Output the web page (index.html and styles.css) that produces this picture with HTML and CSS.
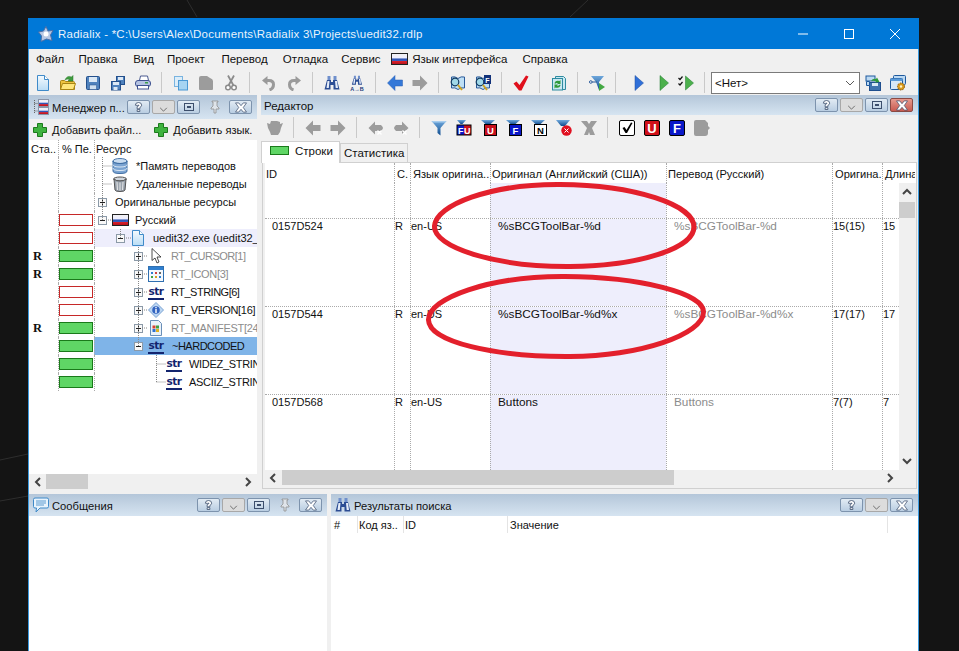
FILE: index.html
```
<!DOCTYPE html>
<html lang="ru">
<head>
<meta charset="utf-8">
<title>Radialix</title>
<link rel="stylesheet" href="styles.css">
</head>
<body>
<svg class="defs" width="0" height="0">
<defs>
<linearGradient id="gd" x1="0" y1="0" x2="0" y2="1"><stop offset="0" stop-color="#f4fafe"/><stop offset="1" stop-color="#b9dcf5"/></linearGradient>
<linearGradient id="gf" x1="0" y1="0" x2="0" y2="1"><stop offset="0" stop-color="#6fa8dc"/><stop offset="1" stop-color="#0f4c8f"/></linearGradient>
<linearGradient id="gr" x1="0" y1="0" x2="0" y2="1"><stop offset="0" stop-color="#f2f2f2"/><stop offset=".4" stop-color="#eef"/><stop offset=".5" stop-color="#2b52b0"/><stop offset=".68" stop-color="#3a5fc0"/><stop offset=".72" stop-color="#d8202a"/><stop offset="1" stop-color="#b01018"/></linearGradient>
<symbol id="logo" viewBox="0 0 16 16"><path d="M8 .5l2 4.500 5-.5-2.500 4.500 1.500 5.500-5.500-1.500L3 15.500l.5-5.500L.5 6l5-1z" fill="#b8c8e4" stroke="#4a6fa8"/><circle cx="8" cy="8" r="2.500" fill="#fff"/></symbol>
<symbol id="doc" viewBox="0 0 16 16"><path d="M2.500.500h7l4 4v11h-11z" fill="url(#gd)" stroke="#3f8ac9"/><path d="M9.500.500v4h4" fill="#fff" stroke="#3f8ac9"/></symbol>
<symbol id="folder" viewBox="0 0 16 16"><path d="M.5 14.500V6.500q0-1 1-1h3l1 1h8q1 0 1 1v7z" fill="#eec33f" stroke="#a98514"/><path d="M.5 14.500l2-6h13l-2 6z" fill="#ffe67c" stroke="#a98514"/><path d="M5 5q2-5 6.500-3L13 .5V6H8l1.500-1.500Q7 3.500 5 5z" fill="#3f9c3f" stroke="#2a7a2a" stroke-width=".5"/></symbol>
<symbol id="save" viewBox="0 0 16 16"><rect x="1.500" y="1.500" width="13" height="13" rx="1" fill="#4f82bd" stroke="#24508c"/><rect x="4" y="2" width="8" height="5" fill="#dbe8f5"/><rect x="4.500" y="10" width="7" height="4.500" fill="#cfe0f0" stroke="#24508c" stroke-width=".5"/></symbol>
<symbol id="saveall" viewBox="0 0 16 16"><rect x="6.500" y="1.500" width="8" height="8" fill="#4f82bd" stroke="#24508c"/><rect x="8" y="2" width="5" height="3" fill="#dbe8f5"/><rect x="1.500" y="6.500" width="9" height="8.500" fill="#4f82bd" stroke="#24508c"/><rect x="3" y="7" width="6" height="3" fill="#dbe8f5"/><rect x="3.500" y="12" width="4" height="3" fill="#dbe8f5"/></symbol>
<symbol id="print" viewBox="0 0 16 16"><path d="M4.500 5.500l1-4.500h7l1 4.500z" fill="#fff" stroke="#4a5a90"/><rect x=".5" y="5.500" width="15" height="6" rx="2.500" fill="#b5c3e2" stroke="#3f5290"/><rect x="2.500" y="10.500" width="11" height="3.500" fill="#fff" stroke="#3f5290"/><rect x="10" y="7" width="3" height="1.500" fill="#3ea04a"/></symbol>
<symbol id="copy" viewBox="0 0 16 16"><rect x="1.500" y="1.500" width="8" height="10" fill="#dcedf9" stroke="#79b4e0"/><rect x="5.500" y="5.500" width="9" height="9.500" fill="#a6d4f2" stroke="#4a98d4"/></symbol>
<symbol id="pasteg" viewBox="0 0 16 16"><path d="M1 3q0-2 2-2h6l3 2q3 1 3 3v8q0 1-1 1H2q-1 0-1-1z" fill="#9c9c9c"/></symbol>
<symbol id="pasteg2" viewBox="0 0 16 16"><path d="M0 3l3 1 1-3h6l3 1v2l3-1-2 5-1 4-2 3H4l-1-3-2-4z" fill="#9c9c9c"/></symbol>
<symbol id="cutg" viewBox="0 0 16 16"><path d="M5 .5l5.500 10M11 .5L5.500 10.500" stroke="#8c8c8c" stroke-width="1.800" fill="none"/><circle cx="5" cy="12.500" r="2.300" fill="#fff" stroke="#8c8c8c" stroke-width="1.500"/><circle cx="11" cy="12.500" r="2.300" fill="#fff" stroke="#8c8c8c" stroke-width="1.500"/></symbol>
<symbol id="undog" viewBox="0 0 16 16"><path d="M5 5.500h3q4.500 0 4.500 4t-4 5.500" stroke="#9a9a9a" stroke-width="3" fill="none"/><path d="M1 5.500L6.500 1v9z" fill="#9a9a9a"/></symbol>
<symbol id="redog" viewBox="0 0 16 16"><path d="M11 5.500H8q-4.500 0-4.500 4t4 5.500" stroke="#9a9a9a" stroke-width="3" fill="none"/><path d="M15 5.500L9.500 1v9z" fill="#9a9a9a"/></symbol>
<symbol id="bino" viewBox="0 0 16 16"><path d="M3.500 1h3v4h-3zM9.500 1h3v4h-3z" fill="#6f8fcc"/><path d="M3 5h4v2h2V5h4l2.500 9.500H9.500V10h-3v4.500H.5z" fill="#2c4d94"/><path d="M3.500 6h2L4.800 13H2.500zM11 6h2l1 7h-2.300z" fill="#e6edf9"/></symbol>
<symbol id="binoab" viewBox="0 0 16 16"><g transform="translate(2.500 0) scale(.68)"><use href="#bino" width="16" height="16"/></g><text x="8" y="16" class="svgt" font-size="5.500" text-anchor="middle" fill="#1c3a7a">A→B</text></symbol>
<symbol id="al" viewBox="0 0 16 16"><path d="M.5 8L8 .5V5h7.500v6H8v4.500z" fill="#3478d8" stroke="#2a5fb0" stroke-width=".5"/></symbol>
<symbol id="ar" viewBox="0 0 16 16"><path d="M15.500 8L8 .5V5H.5v6H8v4.500z" fill="#9c9c9c"/></symbol>
<symbol id="alg" viewBox="0 0 16 16"><path d="M.5 8L8 .5V5h7.500v6H8v4.500z" fill="#9c9c9c"/></symbol>
<symbol id="alx" viewBox="0 0 16 16"><path d="M.5 8L7 1.500V5h6q2 2 2 3t-2 3H7v3.500z" fill="#9c9c9c"/><path d="M9.500 10.500l4 4m0-4l-4 4" stroke="#fff" stroke-width="1.300"/></symbol>
<symbol id="arx" viewBox="0 0 16 16"><path d="M15.500 8L9 1.500V5H3Q1 7 1 8t2 3h6v3.500z" fill="#9c9c9c"/><path d="M9.500 10.500l4 4m0-4l-4 4" stroke="#fff" stroke-width="1.300"/></symbol>
<symbol id="book" viewBox="0 0 16 16"><path d="M8 3.500Q5 1 1.500 2v11q3.500-1 6.500 1.500Q11 12 14.500 13V2Q11 1 8 3.500z" fill="#bfe0f5" stroke="#2a5a9a"/><circle cx="5" cy="7" r="3.800" fill="#a0d8e8" stroke="#123a60" stroke-width="1.200"/><path d="M8 10l4 5" stroke="#cda21e" stroke-width="2"/></symbol>
<symbol id="bookf" viewBox="0 0 16 16"><use href="#book" width="16" height="16"/><rect x="9" y="0" width="7" height="9" fill="#12327a"/><text x="12.500" y="7.500" class="svgt" font-size="7" text-anchor="middle" fill="#fff">F</text></symbol>
<symbol id="tick" viewBox="0 0 16 16"><path d="M.5 8.500l3-2 3 3.500L13 .5l2.500 1L8.500 15.500H6z" fill="#e0101c"/></symbol>
<symbol id="refresh" viewBox="0 0 16 16"><path d="M4.500 1.500h8l2 2v11h-10z" fill="#c8e8f2" stroke="#2e8ba0"/><rect x="1.500" y="3.500" width="10" height="11.500" fill="#c8e8f2" stroke="#2e8ba0"/><path d="M3.500 8q1-3 5-2l1-1v4H6l1-1q-2-.5-3 1zM9.500 10.500q-1 3-5 2l-1 1v-4H7l-1 1q2 .5 3-1z" fill="#2f9a3a"/></symbol>
<symbol id="filterrun" viewBox="0 0 16 16"><path d="M2 1h13l-5 6v8L7 7z" fill="url(#gf)"/><circle cx="1.800" cy="7" r="1.300" fill="#fff" stroke="#2a5a9a"/><path d="M3 7h5" stroke="#2a5a9a"/><path d="M10 8l6 4-6 4z" fill="#43a843"/></symbol>
<symbol id="pb" viewBox="0 0 16 16"><path d="M4 .5l8.500 7.500L4 15.500z" fill="#2f6fd8" stroke="#1e4f9e" stroke-width=".5"/></symbol>
<symbol id="pg" viewBox="0 0 16 16"><path d="M4 .5l8.500 7.500L4 15.500z" fill="#4cb04c" stroke="#1e7a2e" stroke-width=".5"/></symbol>
<symbol id="pc" viewBox="0 0 16 16"><path d="M7.500 1l8 7-8 7z" fill="#4cb04c" stroke="#1e7a2e" stroke-width=".5"/><path d="M.5 3l1.500 1.500L4.500 1.500M.5 8.500L2 10l2.500-3" fill="none" stroke="#111" stroke-width="1.200"/></symbol>
<symbol id="savearr" viewBox="0 0 16 16"><rect x="1" y="1" width="9" height="5" fill="#bcd9f2" stroke="#1f5a9e"/><rect x="4.500" y="7.500" width="11" height="8" fill="#3f73ae" stroke="#1f4f8e"/><rect x="7" y="8" width="6" height="3" fill="#d8e8f5"/><path d="M1.500 6.500h3v4h-3z" fill="#bcd9f2" stroke="#1f5a9e"/><path d="M6 6q2-3 5-2l1-1.500L14.500 7l-5 .5L11 6q-2-.5-5 0z" fill="#2f9a3a"/></symbol>
<symbol id="gearstack" viewBox="0 0 16 16"><rect x="3.500" y=".5" width="12" height="9" rx="1" fill="#bcd9f2" stroke="#1f5a9e"/><rect x=".5" y="3.500" width="12" height="11" rx="1" fill="#d6e8f7" stroke="#1f5a9e"/><rect x=".5" y="3.500" width="12" height="2.500" fill="#5a9ad8"/><circle cx="11" cy="11.500" r="3.500" fill="#d99a1c" stroke="#8c5c10" stroke-dasharray="1.500 1"/><circle cx="11" cy="11.500" r="1.200" fill="#fff3c8"/></symbol>
<symbol id="funnel" viewBox="0 0 16 16"><path d="M.5 1h15L9.500 8v7.500L6.500 13V8z" fill="url(#gf)"/><path d="M.5 1h15l-1.500 1.500H2z" fill="#a8cdee"/></symbol>
<symbol id="ffu" viewBox="0 0 16 16"><path d="M1 0h9L6.500 4h-2z" fill="url(#gf)"/><rect x=".5" y="4.500" width="15" height="11" fill="#000"/><rect x="1.500" y="5.500" width="6.500" height="9" fill="#0a18c8"/><rect x="8" y="5.500" width="6.500" height="9" fill="#c8101c"/><text x="4.800" y="13.500" class="svgt" font-size="9" text-anchor="middle" fill="#fff">F</text><text x="11.300" y="13.500" class="svgt" font-size="9" text-anchor="middle" fill="#fff">U</text></symbol>
<symbol id="fu" viewBox="0 0 16 16"><path d="M0 0h14L9 4.500H5z" fill="url(#gf)"/><rect x="3.500" y="4.500" width="12" height="11" fill="#c8101c" stroke="#000"/><text x="9.500" y="13.500" class="svgt" font-size="9.500" text-anchor="middle" fill="#fff">U</text></symbol>
<symbol id="ff" viewBox="0 0 16 16"><path d="M0 0h14L9 4.500H5z" fill="url(#gf)"/><rect x="3.500" y="4.500" width="12" height="11" fill="#0a18c8" stroke="#000"/><text x="9.500" y="13.500" class="svgt" font-size="9.500" text-anchor="middle" fill="#fff">F</text></symbol>
<symbol id="fn" viewBox="0 0 16 16"><path d="M0 0h14L9 4.500H5z" fill="url(#gf)"/><rect x="3.500" y="4.500" width="12" height="11" fill="#fff" stroke="#000"/><text x="9.500" y="13.500" class="svgt" font-size="9.500" text-anchor="middle" fill="#000">N</text></symbol>
<symbol id="fx" viewBox="0 0 16 16"><path d="M0 0h14L9 6H5z" fill="url(#gf)"/><circle cx="10.500" cy="10.500" r="5.200" fill="#e01020"/><path d="M8.500 8.500l4 4m0-4l-4 4" stroke="#fff" stroke-width="1"/></symbol>
<symbol id="xg" viewBox="0 0 16 16"><path d="M0 1h6l2 3 2-3h6l-5 7 3 7H9L8 12l-1 3H3l3-7z" fill="#9c9c9c"/></symbol>
<symbol id="bchk" viewBox="0 0 16 16"><rect x=".5" y=".5" width="15" height="15" rx="1.500" fill="#fff" stroke="#000"/><path d="M3.500 8l2-1 2 3L12 2.500l1.500.5L8 13H6.500z" fill="#000"/></symbol>
<symbol id="bu" viewBox="0 0 16 16"><rect x=".5" y=".5" width="15" height="15" rx="1.500" fill="#d01018" stroke="#000"/><text x="8" y="13" class="svgt" font-size="13" text-anchor="middle" fill="#fff">U</text></symbol>
<symbol id="bf" viewBox="0 0 16 16"><rect x=".5" y=".5" width="15" height="15" rx="1.500" fill="#0a18c8" stroke="#000"/><text x="8" y="13" class="svgt" font-size="13" text-anchor="middle" fill="#fff">F</text></symbol>
<symbol id="bg" viewBox="0 0 16 16"><path d="M0 2q0-2 2-2h9l3 3v3l2 2-2 2v3q0 3-3 3H2q-2 0-2-2z" fill="#9c9c9c"/></symbol>
<symbol id="plus" viewBox="0 0 14 14"><path d="M4.500.5h5v4h4v5h-4v4h-5v-4h-4v-5h4z" fill="#3fb33f" stroke="#1c7a1c"/></symbol>
<symbol id="mgr" viewBox="0 0 16 16"><rect x="5.500" y=".5" width="10" height="7" fill="url(#gr)" stroke="#8a94a8"/><rect x="5.500" y="8.500" width="10" height="7" fill="url(#gr)" stroke="#8a94a8"/><path d="M1.500 1v14M1.500 4.500h3M1.500 12h3" stroke="#666" stroke-dasharray="1 1" fill="none"/></symbol>
<symbol id="msg" viewBox="0 0 16 16"><path d="M2 1h12q1.500 0 1.500 1.500v7Q15.500 11 14 11H7l-4 4 .5-4H2Q.5 11 .5 9.500v-7Q.5 1 2 1z" fill="#e8f3fc" stroke="#3f8ac9"/><path d="M3 4h10M3 6h10M3 8h8" stroke="#5b9ad0"/></symbol>
<symbol id="q" viewBox="0 0 10 12"><path d="M1.500 4Q1.500 1 5 1t3.500 3Q8.500 5.500 6.500 6.500v1.500h-3V5.500Q5.500 5 5.500 4H4.500Q4.500 4.500 1.500 4zM3.500 9h3v2h-3z" fill="#fff" stroke="#3c4e6c" stroke-width=".9"/></symbol>
<symbol id="chev" viewBox="0 0 10 6"><path d="M1 1l4 4 4-4" fill="none" stroke="#5a5a5a" stroke-width="1"/></symbol>
<symbol id="rest" viewBox="0 0 12 10"><rect x="1.500" y="1.500" width="9" height="7" fill="none" stroke="#3c4e6c"/><rect x="4" y="4" width="4" height="2" fill="#3c4e6c"/></symbol>
<symbol id="xb" viewBox="0 0 14 12"><path d="M1 1h3.500L7 4l2.500-3H13L9.500 6 13 11H9.500L7 8l-2.500 3H1l3.500-5z" fill="#fff" stroke="#3c4e6c" stroke-width=".8"/></symbol>
<symbol id="pin" viewBox="0 0 12 14"><path d="M3 1h6v1H8v4l2 2v1H7v4H5V9H2V8l2-2V2H3z" fill="#dfe4ea" stroke="#8f8f8f" stroke-width=".8"/></symbol>
<symbol id="db" viewBox="0 0 16 16"><ellipse cx="8" cy="3" rx="7" ry="2.500" fill="#c9dcf0" stroke="#4a78ac"/><path d="M1 3v10q0 2.500 7 2.500t7-2.500V3q0 2.500-7 2.500T1 3z" fill="#7ba4d2" stroke="#3f6ea4"/><path d="M1 6.500q0 2.500 7 2.500t7-2.500M1 10q0 2.500 7 2.500T15 10" fill="none" stroke="#dbe8f5"/></symbol>
<symbol id="trash" viewBox="0 0 16 16"><ellipse cx="8" cy="3" rx="6.500" ry="2" fill="#d0d6dd" stroke="#555"/><path d="M2 3l1 11q.5 1.500 5 1.500t5-1.500l1-11q-2 2-6 2T2 3z" fill="#9aa3ad" stroke="#555"/><path d="M5 6l.5 8M8 6.500v8M11 6l-.5 8" stroke="#e8e8e8"/></symbol>
<symbol id="cursor" viewBox="0 0 16 16"><path d="M4 .5v12l3-2.500 2 5 2-1-2-5h4z" fill="#fff" stroke="#222" stroke-width=".8"/></symbol>
<symbol id="grid" viewBox="0 0 16 16"><rect x=".5" y=".5" width="15" height="15" fill="#f4f8fc" stroke="#2f6fb0"/><rect x="1" y="1" width="14" height="3" fill="#2f7fd0"/><path d="M3 6h2v2H3z" fill="#2f7fd0"/><path d="M7 6h2v2H7z" fill="#d04040"/><path d="M11 6h2v2h-2z" fill="#666"/><path d="M3 10h2v2H3z" fill="#40a040"/><path d="M7 10h2v2H7z" fill="#d8a020"/><path d="M11 10h2v2h-2z" fill="#2f7fd0"/></symbol>
<symbol id="ver" viewBox="0 0 16 16"><path d="M8 .5L15.500 8 8 15.500.5 8z" fill="#bcd6f2" stroke="#7aa2d2"/><circle cx="8" cy="8" r="3.800" fill="#3264c0"/><path d="M7.300 5h1.400v1.200H7.300zM7.300 7h1.400v4H7.300z" fill="#fff"/></symbol>
<symbol id="mani" viewBox="0 0 16 16"><path d="M2.500.5h8l3 3v12h-11z" fill="#eaf2fa" stroke="#6a8fb8"/><rect x="4.500" y="5.500" width="3" height="3" fill="#d84030"/><rect x="8" y="5.500" width="3" height="3" fill="#40a040"/><rect x="4.500" y="9" width="3" height="3" fill="#3070d0"/><rect x="8" y="9" width="3" height="3" fill="#e0b020"/></symbol>
<symbol id="exp-plus" viewBox="0 0 9 9"><rect x=".5" y=".5" width="8" height="8" fill="#f8f8f8" stroke="#8c9aa8"/><path d="M2 4.500h5M4.500 2v5" stroke="#222"/></symbol>
<symbol id="exp-minus" viewBox="0 0 9 9"><rect x=".5" y=".5" width="8" height="8" fill="#f8f8f8" stroke="#8c9aa8"/><path d="M2 4.500h5" stroke="#222"/></symbol>
</defs>
</svg>

<svg class="wall" width="959" height="651"><path d="M187 0l10 17M588 0l-18 17M0 460l28-6M0 501l28-5" stroke="#2e2e2e" fill="none"/></svg>

<div class="window">
  <header class="titlebar">
    <svg class="ico title-logo"><use href="#logo"/></svg>
    <span class="title-text">Radialix - *C:\Users\Alex\Documents\Radialix 3\Projects\uedit32.rdlp</span>
    <div class="caption">
      <svg class="cap-ico" viewBox="0 0 12 12"><path d="M1 6h10" stroke="#fff"/></svg>
      <svg class="cap-ico" viewBox="0 0 12 12"><rect x="1.500" y="1.500" width="9" height="9" fill="none" stroke="#fff"/></svg>
      <svg class="cap-ico" viewBox="0 0 12 12"><path d="M1 1l10 10M11 1L1 11" stroke="#fff"/></svg>
    </div>
  </header>

  <nav class="menubar">
    <span class="mi m-a">Файл</span><span class="mi m-b">Правка</span><span class="mi m-c">Вид</span><span class="mi m-d">Проект</span><span class="mi m-e">Перевод</span><span class="mi m-f">Отладка</span><span class="mi m-g">Сервис</span>
    <svg class="flag m-h" viewBox="0 0 17 12"><rect x=".5" y=".5" width="16" height="11" fill="url(#gr)" stroke="#222"/></svg>
    <span class="mi m-i">Язык интерфейса</span><span class="mi m-j">Справка</span>
  </nav>

  <div class="toolbar main-tb">
    <span class="tb"><svg class="ico"><use href="#doc"/></svg></span>
    <span class="tb"><svg class="ico"><use href="#folder"/></svg></span>
    <span class="tb"><svg class="ico"><use href="#save"/></svg></span>
    <span class="tb"><svg class="ico"><use href="#saveall"/></svg></span>
    <span class="tb"><svg class="ico"><use href="#print"/></svg></span>
    <i class="sep"></i>
    <span class="tb"><svg class="ico"><use href="#copy"/></svg></span>
    <span class="tb"><svg class="ico"><use href="#pasteg"/></svg></span>
    <span class="tb"><svg class="ico"><use href="#cutg"/></svg></span>
    <i class="sep"></i>
    <span class="tb"><svg class="ico"><use href="#undog"/></svg></span>
    <span class="tb"><svg class="ico"><use href="#redog"/></svg></span>
    <i class="sep"></i>
    <span class="tb"><svg class="ico"><use href="#bino"/></svg></span>
    <span class="tb"><svg class="ico"><use href="#binoab"/></svg></span>
    <i class="sep"></i>
    <span class="tb"><svg class="ico"><use href="#al"/></svg></span>
    <span class="tb"><svg class="ico"><use href="#ar"/></svg></span>
    <i class="sep"></i>
    <span class="tb"><svg class="ico"><use href="#book"/></svg></span>
    <span class="tb"><svg class="ico"><use href="#bookf"/></svg></span>
    <i class="sep"></i>
    <span class="tb"><svg class="ico"><use href="#tick"/></svg></span>
    <i class="sep"></i>
    <span class="tb"><svg class="ico"><use href="#refresh"/></svg></span>
    <i class="sep"></i>
    <span class="tb"><svg class="ico"><use href="#filterrun"/></svg></span>
    <i class="sep sep-wide"></i>
    <span class="tb"><svg class="ico"><use href="#pb"/></svg></span>
    <span class="tb"><svg class="ico"><use href="#pg"/></svg></span>
    <span class="tb tb-narrow"><svg class="ico"><use href="#pc"/></svg></span>
    <i class="sep sep-combo"></i>
    <div class="combo"><span>&lt;Нет&gt;</span><svg class="chev"><use href="#chev"/></svg></div>
    <span class="tb"><svg class="ico"><use href="#savearr"/></svg></span>
    <span class="tb"><svg class="ico"><use href="#gearstack"/></svg></span>
  </div>

  <div class="dock-top">
    <section class="left-pane">
      <div class="pane-head head-tall">
        <svg class="ico head-ico"><use href="#mgr"/></svg>
        <span class="head-title">Менеджер п...</span>
        <div class="head-btns">
          <span class="hb"><svg class="hg-q"><use href="#q"/></svg></span>
          <span class="hb hb-grey"><svg class="hg-c"><use href="#chev"/></svg></span>
          <span class="hb"><svg class="hg-r"><use href="#rest"/></svg></span>
          <svg class="hg-p"><use href="#pin"/></svg>
          <span class="hb"><svg class="hg-x"><use href="#xb"/></svg></span>
        </div>
      </div>
      <div class="add-bar">
        <svg class="plus"><use href="#plus"/></svg><span class="add-l">Добавить файл...</span>
        <svg class="plus plus-2"><use href="#plus"/></svg><span class="add-l">Добавить язык.</span>
      </div>
      <div class="tree">
        <div class="tree-head"><span class="c-st">Ста..</span><span class="c-pr">% Пе.</span><span class="c-rs">Ресурс</span></div>
        <div class="tr"><span class="c-st"></span><span class="c-pr"></span><span class="c-rs i17"><svg class="ico"><use href="#db"/></svg><span class="lb g8">*Память переводов</span></span></div>
        <div class="tr"><span class="c-st"></span><span class="c-pr"></span><span class="c-rs i17"><svg class="ico"><use href="#trash"/></svg><span class="lb g8">Удаленные переводы</span></span></div>
        <div class="tr"><span class="c-st"></span><span class="c-pr"></span><span class="c-rs i3"><svg class="exp"><use href="#exp-plus"/></svg><span class="lb g8">Оригинальные ресурсы</span></span></div>
        <div class="tr"><span class="c-st"></span><span class="c-pr"><i class="bar bar-e"></i></span><span class="c-rs i3"><svg class="exp"><use href="#exp-minus"/></svg><svg class="flag fl-t" viewBox="0 0 17 12"><rect x=".5" y=".5" width="16" height="11" fill="url(#gr)" stroke="#222"/></svg><span class="lb g6">Русский</span></span></div>
        <div class="tr"><span class="c-st"></span><span class="c-pr"><i class="bar bar-e"></i></span><span class="c-rs i21 hl"><svg class="exp"><use href="#exp-minus"/></svg><svg class="ico ic-m7"><use href="#doc"/></svg><span class="lb g5">uedit32.exe (uedit32_</span></span></div>
        <div class="tr"><span class="c-st">R</span><span class="c-pr"><i class="bar bar-f"></i></span><span class="c-rs i39"><svg class="exp"><use href="#exp-plus"/></svg><svg class="ico ic-m5"><use href="#cursor"/></svg><span class="lb g7 grey up">RT_CURSOR[1]</span></span></div>
        <div class="tr"><span class="c-st">R</span><span class="c-pr"><i class="bar bar-f"></i></span><span class="c-rs i39"><svg class="exp"><use href="#exp-plus"/></svg><svg class="ico ic-m5"><use href="#grid"/></svg><span class="lb g7 grey up-s">RT_ICON[3]</span></span></div>
        <div class="tr"><span class="c-st"></span><span class="c-pr"><i class="bar bar-e"></i></span><span class="c-rs i39"><svg class="exp"><use href="#exp-plus"/></svg><span class="str ic-m5">str</span><span class="lb g7 up">RT_STRING[6]</span></span></div>
        <div class="tr"><span class="c-st"></span><span class="c-pr"><i class="bar bar-e"></i></span><span class="c-rs i39"><svg class="exp"><use href="#exp-plus"/></svg><svg class="ico ic-m5"><use href="#ver"/></svg><span class="lb g7 up-s">RT_VERSION[16]</span></span></div>
        <div class="tr"><span class="c-st">R</span><span class="c-pr"><i class="bar bar-f"></i></span><span class="c-rs i39"><svg class="exp"><use href="#exp-plus"/></svg><svg class="ico ic-m5"><use href="#mani"/></svg><span class="lb g7 grey up-s">RT_MANIFEST[24</span></span></div>
        <div class="tr"><span class="c-st"></span><span class="c-pr"><i class="bar bar-f"></i></span><span class="c-rs i39 sel"><svg class="exp"><use href="#exp-minus"/></svg><span class="str ic-m5">str</span><span class="lb g8 up">~HARDCODED</span></span></div>
        <div class="tr"><span class="c-st"></span><span class="c-pr"><i class="bar bar-f"></i></span><span class="c-rs i71"><span class="str">str</span><span class="lb g7 up-s">WIDEZ_STRIN</span></span></div>
        <div class="tr"><span class="c-st"></span><span class="c-pr"><i class="bar bar-f"></i></span><span class="c-rs i71"><span class="str">str</span><span class="lb g7 up-s">ASCIIZ_STRIN</span></span></div>
        <svg class="tree-lines" width="228" height="334"><path d="M73.500 17v63M73.500 26h9M73.500 44h9M91.500 89v9M109.500 107v99M113 116h6M113 134h5M113 152h5M113 170h5M113 188h5M127.500 215v27M127.500 224h9M127.500 242h9M77 80h5M95 98h7" stroke="#888" stroke-dasharray="1 1" fill="none"/></svg>
      </div>
      <div class="hscroll hs-left">
        <svg class="sb-l" viewBox="0 0 8 10"><path d="M6 1L2 5l4 4" fill="none" stroke="#444" stroke-width="2"/></svg>
        <i class="thumb th-left"></i>
        <svg class="sb-r" viewBox="0 0 8 10"><path d="M2 1l4 4-4 4" fill="none" stroke="#444" stroke-width="2"/></svg>
      </div>
    </section>

    <section class="editor">
      <div class="pane-head head-short">
        <span class="head-title ed-title">Редактор</span>
        <div class="head-btns">
          <span class="hb"><svg class="hg-q"><use href="#q"/></svg></span>
          <span class="hb hb-grey"><svg class="hg-c"><use href="#chev"/></svg></span>
          <span class="hb"><svg class="hg-r"><use href="#rest"/></svg></span>
          <span class="hb hb-red"><svg class="hg-x"><use href="#xb"/></svg></span>
        </div>
      </div>
      <div class="toolbar ed-tb">
        <span class="tb"><svg class="ico"><use href="#pasteg2"/></svg></span>
        <i class="sep"></i>
        <span class="tb"><svg class="ico"><use href="#alg"/></svg></span>
        <span class="tb"><svg class="ico"><use href="#ar"/></svg></span>
        <i class="sep"></i>
        <span class="tb"><svg class="ico"><use href="#alx"/></svg></span>
        <span class="tb"><svg class="ico"><use href="#arx"/></svg></span>
        <i class="sep"></i>
        <span class="tb"><svg class="ico"><use href="#funnel"/></svg></span>
        <span class="tb"><svg class="ico"><use href="#ffu"/></svg></span>
        <span class="tb"><svg class="ico"><use href="#fu"/></svg></span>
        <span class="tb"><svg class="ico"><use href="#ff"/></svg></span>
        <span class="tb"><svg class="ico"><use href="#fn"/></svg></span>
        <span class="tb"><svg class="ico"><use href="#fx"/></svg></span>
        <span class="tb"><svg class="ico"><use href="#xg"/></svg></span>
        <i class="sep"></i>
        <span class="tb"><svg class="ico"><use href="#bchk"/></svg></span>
        <span class="tb"><svg class="ico"><use href="#bu"/></svg></span>
        <span class="tb"><svg class="ico"><use href="#bf"/></svg></span>
        <span class="tb"><svg class="ico"><use href="#bg"/></svg></span>
      </div>
      <div class="tabs">
        <div class="tab tab-on"><i class="tab-swatch"></i><span>Строки</span></div>
        <div class="tab tab-off">Статистика</div>
      </div>
      <div class="panel">
        <div class="grid-head">
          <span class="gc g-id">ID</span><span class="gc">С.</span><span class="gc">Язык оригина..</span><span class="gc gc-tight">Оригинал (Английский (США))</span><span class="gc gc-mid">Перевод (Русский)</span><span class="gc">Оригина.</span><span class="gc">Длина</span>
        </div>
        <div class="grid-wrap">
          <div class="grid-body">
            <div class="gr gr-first"><span class="gd"></span><span class="gd"></span><span class="gd"></span><span class="gd lav"></span><span class="gd"></span><span class="gd"></span><span class="gd"></span></div>
            <div class="gr"><span class="gd d-id">0157D524</span><span class="gd d-n">R</span><span class="gd d-n">en-US</span><span class="gd lav d-t">%sBCGToolBar-%d</span><span class="gd d-t grey">%sBCGToolBar-%d</span><span class="gd d-n">15(15)</span><span class="gd d-n">15</span></div>
            <div class="gr"><span class="gd d-id">0157D544</span><span class="gd d-n">R</span><span class="gd d-n">en-US</span><span class="gd lav d-t">%sBCGToolBar-%d%x</span><span class="gd d-t grey">%sBCGToolBar-%d%x</span><span class="gd d-n">17(17)</span><span class="gd d-n">17</span></div>
            <div class="gr"><span class="gd d-id">0157D568</span><span class="gd d-n">R</span><span class="gd d-n">en-US</span><span class="gd lav d-t">Buttons</span><span class="gd d-t grey">Buttons</span><span class="gd d-n">7(7)</span><span class="gd d-n">7</span></div>
          </div>
          <div class="vscroll">
            <svg class="vs-up" viewBox="0 0 10 8"><path d="M1 6l4-4 4 4" fill="none" stroke="#444" stroke-width="2"/></svg>
            <i class="vthumb"></i>
            <svg class="vs-dn" viewBox="0 0 10 8"><path d="M1 2l4 4 4-4" fill="none" stroke="#444" stroke-width="2"/></svg>
          </div>
        </div>
        <div class="hscroll hs-ed">
          <svg class="sb-l" viewBox="0 0 8 10"><path d="M6 1L2 5l4 4" fill="none" stroke="#444" stroke-width="2"/></svg>
          <i class="thumb th-ed"></i>
          <svg class="sb-r" viewBox="0 0 8 10"><path d="M2 1l4 4-4 4" fill="none" stroke="#444" stroke-width="2"/></svg>
        </div>
      </div>
    </section>
  </div>

  <div class="dock-bottom">
    <section class="msgs">
      <div class="pane-head head-bot">
        <svg class="ico head-ico"><use href="#msg"/></svg>
        <span class="head-title">Сообщения</span>
        <div class="head-btns">
          <span class="hb"><svg class="hg-q"><use href="#q"/></svg></span>
          <span class="hb hb-grey"><svg class="hg-c"><use href="#chev"/></svg></span>
          <span class="hb"><svg class="hg-r"><use href="#rest"/></svg></span>
          <svg class="hg-p"><use href="#pin"/></svg>
          <span class="hb"><svg class="hg-x"><use href="#xb"/></svg></span>
        </div>
      </div>
      <div class="white-fill"></div>
    </section>
    <section class="search">
      <div class="pane-head head-bot">
        <svg class="ico head-ico s-ico"><use href="#bino"/></svg>
        <span class="head-title">Результаты поиска</span>
        <div class="head-btns">
          <span class="hb"><svg class="hg-q"><use href="#q"/></svg></span>
          <span class="hb hb-grey"><svg class="hg-c"><use href="#chev"/></svg></span>
          <span class="hb"><svg class="hg-x"><use href="#xb"/></svg></span>
        </div>
      </div>
      <div class="res-head"><span class="rh rh-a">#</span><span class="rh rh-b">Код яз..</span><span class="rh rh-c">ID</span><span class="rh rh-d">Значение</span><span class="rh rh-e"></span></div>
      <div class="white-fill"></div>
    </section>
  </div>
</div>

<svg class="annot" width="959" height="651" fill="none" stroke="#e3202c" stroke-width="5">
  <path d="M434.500 226C436 205 490 184 560 184.500C635 185 694 205 694 227C694 248 640 266 570 266.500C495 267 433 247 434.500 226Z"/>
  <path d="M428.500 320C428 298 490 276 565 276.500C640 277 704 293 703.500 312C703 335 640 356 570 356.500C495 357 429 342 428.500 320Z"/>
</svg>
</body>
</html>
```

FILE: styles.css
```
* { box-sizing: border-box; }
html, body { margin: 0; padding: 0; }
body {
  width: 959px;
  height: 651px;
  overflow: hidden;
  background: #141414;
  font-family: "Liberation Sans", sans-serif;
  font-size: 11px;
  color: #111;
  position: relative;
}
.defs { position: absolute; }
.wall { position: absolute; left: 0; top: 0; }
.annot { position: absolute; left: 0; top: 0; pointer-events: none; }
.svgt { font-family: "Liberation Sans", sans-serif; font-weight: 700; }

.window {
  position: relative;
  margin: 18px 0 0 28px;
  width: 891px;
  height: 633px;
  background: #f0f0f0;
  border-left: 1px solid #3a9ae0;
  border-right: 1px solid #3a9ae0;
  display: flex;
  flex-direction: column;
}

.titlebar {
  height: 31px;
  flex: none;
  margin: 0 -1px;
  background: #0078d7;
  color: #eaf3fb;
  display: flex;
  align-items: center;
  padding-left: 10px;
  font-size: 11.500px;
}
.title-logo { width: 16px; height: 16px; flex: none; }
.title-text { margin-left: 4px; padding-top: 1px; letter-spacing: .23px; }
.caption { margin-left: auto; display: flex; align-items: center; height: 100%; padding-right: 18px; gap: 34px; }
.cap-ico { width: 12px; height: 12px; }

.menubar { height: 21px; flex: none; display: flex; align-items: center; font-size: 11.500px; padding: 0 0 2px 7px; }
.mi { flex: none; }
.m-b { margin-left: 14.300px; }
.m-c { margin-left: 15.700px; }
.m-d { margin-left: 13px; }
.m-e { margin-left: 16.600px; }
.m-f { margin-left: 15px; }
.m-g { margin-left: 13px; }
.m-h { margin-left: 10.700px; }
.m-i { margin-left: 4px; }
.m-j { margin-left: 15px; }
.flag { width: 17px; height: 12px; flex: none; }

.toolbar { display: flex; align-items: center; flex: none; }
.main-tb { height: 25px; padding-left: 1px; }
.ed-tb { height: 25px; padding-left: 1px; }
.tb { width: 25px; height: 18px; flex: none; display: flex; align-items: center; justify-content: center; }
.tb-narrow { width: 20px; }
.ico { width: 16px; height: 16px; flex: none; display: block; }
.sep { width: 1px; height: 21px; margin: 0 6px; background: #c9c9c9; flex: none; }
.sep-wide { margin-right: 10px; }
.sep-combo { margin: 0 6px 0 8px; }
.combo {
  width: 149px;
  height: 22px;
  flex: none;
  background: #fff;
  border: 1px solid #7a7a7a;
  display: flex;
  align-items: center;
  justify-content: space-between;
  padding: 0 4px 0 3px;
  font-size: 11.500px;
}
.chev { width: 10px; height: 6px; }

.dock-top { height: 399px; flex: none; display: flex; gap: 4px; }
.dock-bottom { flex: 1; min-height: 0; display: flex; gap: 4px; }
.left-pane { width: 228px; flex: none; display: flex; flex-direction: column; }
.editor { flex: 1; min-width: 0; display: flex; flex-direction: column; }
.msgs { width: 298px; flex: none; display: flex; flex-direction: column; }
.search { flex: 1; min-width: 0; display: flex; flex-direction: column; }

.pane-head {
  flex: none;
  display: flex;
  align-items: center;
  background: linear-gradient(#b4c6d9, #d6e4f1);
  padding-right: 5px;
}
.head-tall { height: 24px; }
.head-short { height: 20px; }
.head-bot { height: 22px; }
.head-ico { margin-left: 4px; }
.s-ico { margin-left: 4px; }
.head-title { margin-left: 3px; padding-top: 1px; white-space: nowrap; font-size: 11.200px; }
.ed-title { margin-left: 3px; font-size: 11.500px; }
.head-btns { margin-left: auto; display: flex; align-items: center; gap: 2px; }
.hb {
  width: 23px;
  height: 14px;
  border: 1px solid #7d93ad;
  border-radius: 2px;
  background: linear-gradient(#e2ebf4, #b9cde2);
  display: flex;
  align-items: center;
  justify-content: center;
  flex: none;
}
.hb-grey { background: #dcdcdc; border-color: #a8a8a8; }
.hb-red { background: linear-gradient(#e79a8e, #c85a50); border-color: #8a4a44; }
.hg-q { width: 9px; height: 12px; }
.hg-c { width: 9px; height: 5px; margin-top: 5px; }
.hg-r { width: 12px; height: 10px; }
.hg-x { width: 14px; height: 11px; }
.hg-p { width: 12px; height: 14px; margin: 0 6px 0 7px; flex: none; }

.add-bar { height: 21px; flex: none; display: flex; align-items: center; padding-left: 4px; white-space: nowrap; overflow: hidden; font-size: 11.100px; }
.plus { width: 14px; height: 14px; flex: none; }
.plus-2 { margin-left: 13px; }
.add-l { margin-left: 5px; }

.tree { height: 334px; flex: none; background: #fff; position: relative; overflow: hidden; }
.tree-head { height: 17px; display: flex; align-items: center; }
.tree-head .c-st { padding-left: 2px; }
.tree-head .c-pr { padding-left: 3px; }
.tree-head .c-rs { padding-left: 1px; }
.tr { height: 18px; display: flex; }
.tree-head .c-st, .tr .c-st { width: 29px; flex: none; }
.tr .c-st { padding-left: 4px; font-weight: 700; font-family: "Liberation Serif", serif; font-size: 12.500px; line-height: 18px; }
.c-pr { width: 36px; flex: none; border-left: 1px dotted #aaa; display: flex; align-items: center; }
.tree-head .c-pr, .tree-head .c-rs { height: 17px; }
.c-rs { flex: 1; min-width: 0; border-left: 1px dotted #aaa; display: flex; align-items: center; white-space: nowrap; overflow: hidden; }
.bar { display: block; width: 34px; height: 12px; }
.bar-e { background: #fff; border: 1px solid #c62828; }
.bar-f { background: #5fd665; border: 1px solid #1a7a1a; }
.exp { width: 9px; height: 9px; flex: none; }
.i17 { padding-left: 17px; }
.i3 { padding-left: 3px; }
.i21 { padding-left: 21px; }
.i39 { padding-left: 39px; }
.i71 { padding-left: 71px; }
.hl { background: #eeeefc; }
.sel { background: #7fb4e8; }
.grey { color: #8c8c8c; }
.lb { flex: none; }
.up { letter-spacing: -.5px; }
.up-s { letter-spacing: -.3px; }
.g5 { margin-left: 7px; }
.g6 { margin-left: 6px; }
.g7 { margin-left: 7px; }
.g8 { margin-left: 8px; }
.fl-t { margin-left: 5px; }
.ic-m5 { margin-left: 5px; }
.ic-m7 { margin-left: 5px; }
.str {
  width: 16px;
  flex: none;
  font-family: "DejaVu Sans", sans-serif;
  font-weight: 700;
  font-size: 10.500px;
  line-height: 13px;
  color: #12246e;
  border-bottom: 2px solid #12246e;
  text-align: center;
  letter-spacing: -.4px;
}
.tree-lines { position: absolute; left: 0; top: 0; pointer-events: none; }

.hscroll { height: 15px; flex: none; display: flex; align-items: center; background: #f0f0f0; position: relative; }
.sb-l, .sb-r { width: 8px; height: 10px; flex: none; }
.thumb { display: block; height: 100%; background: #cdcdcd; flex: none; }
.hs-left .sb-l { margin-left: 5px; }
.th-left { width: 42px; margin-left: 4px; }
.hs-left .sb-r { margin-left: auto; margin-right: 5px; }
.hs-ed .sb-l { margin-left: 4px; }
.th-ed { width: 392px; margin-left: 5px; }
.hs-ed .sb-r { margin-left: auto; margin-right: 21px; }

.tabs { height: 22px; flex: none; display: flex; align-items: flex-end; font-size: 11.500px; }
.tab { border: 1px solid #d0d0d0; border-bottom: 0; flex: none; display: flex; align-items: center; }
.tab-on { width: 79px; height: 22px; background: #fff; padding-left: 8px; gap: 6px; position: relative; margin-bottom: -1px; padding-bottom: 3px; }
.tab-off { width: 68px; height: 19px; background: #f0f0f0; padding-left: 3px; }
.tab-swatch { display: block; width: 19px; height: 9px; background: #5fd665; border: 1px solid #1a7a1a; margin-bottom: 2px; }

.panel {
  height: 327px;
  flex: none;
  margin: 0 1px;
  background: #f0f0f0;
  border: 1px solid #d0d0d0;
  padding-left: 2px;
  display: flex;
  flex-direction: column;
  overflow: hidden;
}
.grid-head {
  height: 20px;
  flex: none;
  background: #fff;
  display: grid;
  grid-template-columns: 129px 16px 80px 176px 166px 50px 33px;
  white-space: nowrap;
}
.gc { border-left: 1px dotted #aaa; padding: 3px 0 0 2px; overflow: hidden; line-height: 16px; font-size: 11.100px; }
.gc-tight { padding-left: 1px; }
.gc-mid { padding-left: 1px; }
.g-id { border-left: 0; padding-left: 1px; }
.grid-wrap { height: 287px; flex: none; display: flex; }
.grid-body { width: 634px; flex: none; background: #fff; overflow: hidden; }
.gr {
  height: 88px;
  display: grid;
  grid-template-columns: 129px 16px 80px 176px 166px 50px 17px;
  border-top: 1px dotted #aaa;
  white-space: nowrap;
}
.gr-first { height: 35px; border-top: 0; }
.gd { border-left: 1px dotted #aaa; overflow: hidden; line-height: 14px; }
.gd:first-child { border-left: 0; }
.lav { background: #eeeefc; }
.d-id { padding-left: 7px; }
.d-n { padding-left: 0; }
.d-t { padding-left: 7px; font-size: 11.800px; }
.vscroll { width: 16px; flex: none; background: #f0f0f0; display: flex; flex-direction: column; align-items: center; }
.vs-up { width: 10px; height: 8px; margin-top: 5px; flex: none; }
.vthumb { display: block; width: 100%; height: 16px; background: #cdcdcd; margin-top: 6px; flex: none; }
.vs-dn { width: 10px; height: 8px; margin-top: auto; margin-bottom: 5px; flex: none; }
.hs-ed { width: 650px; }

.white-fill { flex: 1; background: #fff; }
.res-head { height: 17px; flex: none; background: #fff; display: flex; align-items: center; }
.rh { flex: none; height: 17px; line-height: 18px; padding-left: 3px; border-right: 1px solid #e4e4e4; white-space: nowrap; overflow: hidden; }
.rh-a { width: 27px; }
.rh-b { width: 46px; padding-left: 1px; }
.rh-c { width: 104px; padding-left: 1px; }
.rh-d { width: 380px; padding-left: 2px; }
.rh-e { width: 0; border: 0; }
```
